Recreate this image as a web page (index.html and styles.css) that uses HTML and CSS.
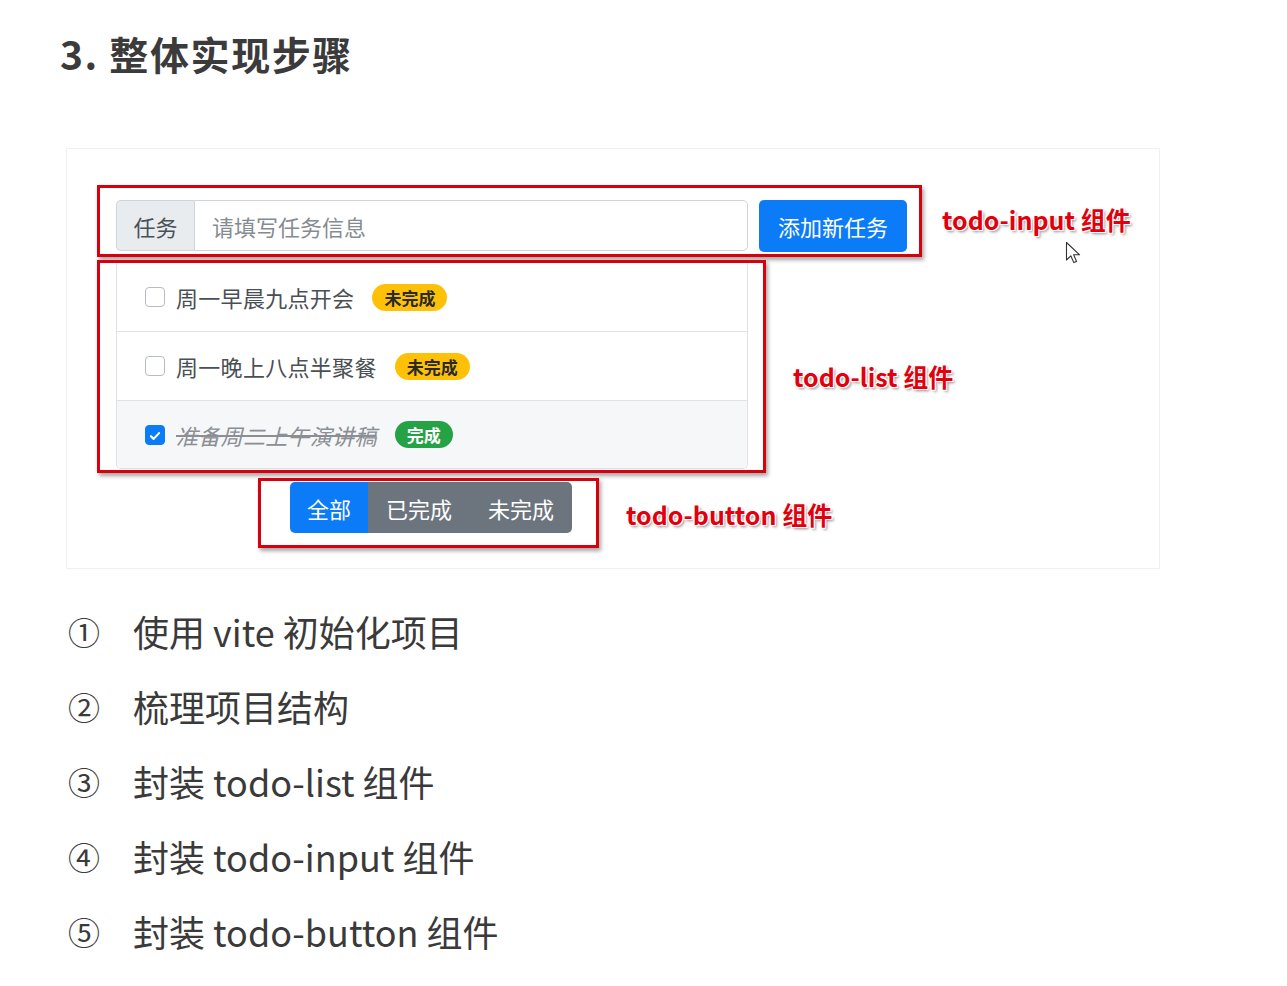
FILE: index.html
```html
<!DOCTYPE html>
<html lang="zh-CN">
<head>
<meta charset="utf-8">
<title>整体实现步骤</title>
<link rel="stylesheet" href="styles.css">
</head>
<body>
<div class="page">
  <h2 class="title">3. 整体实现步骤</h2>

  <div class="demo">
    <div class="row row-input">
      <div class="mark mark-input">
        <div class="input-group">
          <span class="addon">任务</span>
          <input class="field" type="text" placeholder="请填写任务信息">
        </div>
        <button class="btn btn-primary btn-add">添加新任务</button>
      </div>
      <span class="note">todo-input 组件</span>
    </div>

    <div class="row row-list">
      <div class="mark mark-list">
        <ul class="list-group">
          <li class="list-item">
            <span class="check"></span>
            <span class="task">周一早晨九点开会</span>
            <span class="badge badge-warn">未完成</span>
          </li>
          <li class="list-item">
            <span class="check"></span>
            <span class="task">周一晚上八点半聚餐</span>
            <span class="badge badge-warn">未完成</span>
          </li>
          <li class="list-item done">
            <span class="check checked"><svg viewBox="0 0 20 20" width="20" height="20"><path d="M5.5 10.2l3 3 6-6.4" fill="none" stroke="#fff" stroke-width="2.4" stroke-linecap="round" stroke-linejoin="round"/></svg></span>
            <span class="task">准备周二上午演讲稿</span>
            <span class="badge badge-ok">完成</span>
          </li>
        </ul>
      </div>
      <span class="note">todo-list 组件</span>
    </div>

    <div class="row row-btn">
      <div class="mark mark-btn">
        <div class="btn-group">
          <button class="btn btn-primary seg">全部</button>
          <button class="btn btn-secondary seg">已完成</button>
          <button class="btn btn-secondary seg">未完成</button>
        </div>
      </div>
      <span class="note">todo-button 组件</span>
    </div>

    <svg class="cursor" viewBox="0 0 16 24" width="16" height="24"><path d="M1.5 1.5v17.5l4.3-4.2 3 6.8 2.8-1.2-3-6.6h6z" fill="#fff" stroke="#333" stroke-width="1.1" stroke-linejoin="round"/></svg>
  </div>

  <ol class="steps">
    <li><span class="num">①</span>使用 vite 初始化项目</li>
    <li><span class="num">②</span>梳理项目结构</li>
    <li><span class="num">③</span>封装 todo-list 组件</li>
    <li><span class="num">④</span>封装 todo-input 组件</li>
    <li><span class="num">⑤</span>封装 todo-button 组件</li>
  </ol>
</div>
</body>
</html>
```

FILE: styles.css
```css
* { box-sizing: border-box; }

body {
  margin: 0;
  background: #fff;
  font-family: "Noto Sans CJK SC", "Noto Sans", sans-serif;
  color: #3a3a3a;
}

.page {
  padding: 0 0 0 60px;
}

.title {
  margin: 0;
  padding-top: 27px;
  font-size: 39px;
  line-height: 53px;
  font-weight: 700;
  color: #3b3b3b;
  letter-spacing: 1.6px;
}

.demo {
  position: relative;
  margin: 68px 0 0 6px;
  width: 1094px;
  height: 421px;
  border: 1px solid #f0f0f4;
  padding: 36px 0 0 30px;
}

.row {
  display: flex;
  align-items: center;
}

.mark {
  border: 3px solid #d8000c;
  box-shadow: 2px 3px 4px rgba(0, 0, 0, 0.35);
}

.note {
  font-size: 25px;
  font-weight: 700;
  color: #e3000e;
  text-shadow:
    -1px -1px 0 #fff, 1px -1px 0 #fff, -1px 1px 0 #fff, 1px 1px 0 #fff,
    2px 2px 3px rgba(0, 0, 0, 0.45);
  white-space: nowrap;
}

/* todo-input */
.mark-input {
  display: flex;
  gap: 11px;
  width: 825px;
  height: 72px;
  padding: 12px 0 0 16px;
}

.row-input .note { margin-left: 20px; margin-top: -4px; }

.input-group {
  display: flex;
  width: 632px;
  height: 51px;
}

.addon {
  width: 78px;
  display: flex;
  align-items: center;
  justify-content: center;
  background: #e9ecef;
  border: 1px solid #ced4da;
  border-right: 0;
  border-radius: 5px 0 0 5px;
  font-size: 22px;
  color: #495057;
}

.field {
  flex: 1;
  min-width: 0;
  border: 1px solid #ced4da;
  border-radius: 0 5px 5px 0;
  padding: 0 17px;
  font-family: inherit;
  font-size: 22px;
  color: #495057;
  background: #fff;
  outline: none;
}

.field::placeholder { color: #868b91; }

.btn {
  border: 0;
  font-family: inherit;
  font-size: 22px;
  color: #fff;
  cursor: pointer;
}

.btn-primary { background: #0b7bf8; }
.btn-secondary { background: #6c757d; }

.btn-add {
  width: 148px;
  height: 52px;
  border-radius: 5px;
}

/* todo-list */
.row-list { margin-top: 3px; }
.row-list .note { margin-left: 27px; margin-top: 18px; }

.mark-list {
  width: 669px;
  height: 213px;
  padding: 0 0 0 16px;
  overflow: hidden;
}

.list-group {
  list-style: none;
  margin: 0;
  padding: 0;
  width: 632px;
  border: 1px solid #dfe2e6;
  border-top: 0;
  border-radius: 0 0 5px 5px;
  overflow: hidden;
}

.list-item {
  display: flex;
  align-items: center;
  height: 69px;
  padding-left: 28px;
  border-bottom: 1px solid #dfe2e6;
  font-size: 22px;
  color: #4a4f55;
}

.list-item:last-child { border-bottom: 0; height: 67px; }

.list-item.done { background: #f6f7f9; }

.check {
  width: 20px;
  height: 20px;
  border: 1px solid #b7bcc2;
  border-radius: 4px;
  background: #fff;
  margin-right: 11px;
  display: flex;
}

.check.checked {
  background: #0b7bf8;
  border-color: #0b7bf8;
}

.task { letter-spacing: 0.3px; }

.done .task {
  font-style: italic;
  text-decoration: line-through;
  color: #8b8f94;
}

.badge {
  margin-left: 18px;
  height: 27px;
  padding: 0 12px;
  border-radius: 14px;
  display: inline-flex;
  align-items: center;
  font-size: 17px;
  font-weight: 700;
}

.badge-warn { background: #ffc107; color: #2a2a2a; }
.badge-ok { background: #24a245; color: #fff; }

/* todo-button */
.row-btn { margin-top: 5px; }
.row-btn .note { margin-left: 27px; margin-top: 2px; }

.mark-btn {
  margin-left: 161px;
  width: 341px;
  height: 70px;
  padding: 1px 0 0 29px;
}

.btn-group {
  display: flex;
  height: 51px;
  border-radius: 5px;
  overflow: hidden;
  width: 282px;
}

.seg { height: 51px; }
.seg:nth-child(1) { width: 78px; }
.seg:nth-child(2) { width: 102px; }
.seg:nth-child(3) { width: 102px; }

.cursor {
  position: absolute;
  left: 998px;
  top: 92px;
}

/* steps */
.steps {
  list-style: none;
  margin: 25px 0 0 0;
  padding: 0;
}

.steps li {
  height: 75px;
  line-height: 75px;
  font-size: 36px;
  color: #3a3a3a;
  display: flex;
  align-items: center;
}

.num {
  display: inline-block;
  width: 73px;
  padding-left: 8px;
  font-size: 32px;
  color: #3a3a3a;
}
```
